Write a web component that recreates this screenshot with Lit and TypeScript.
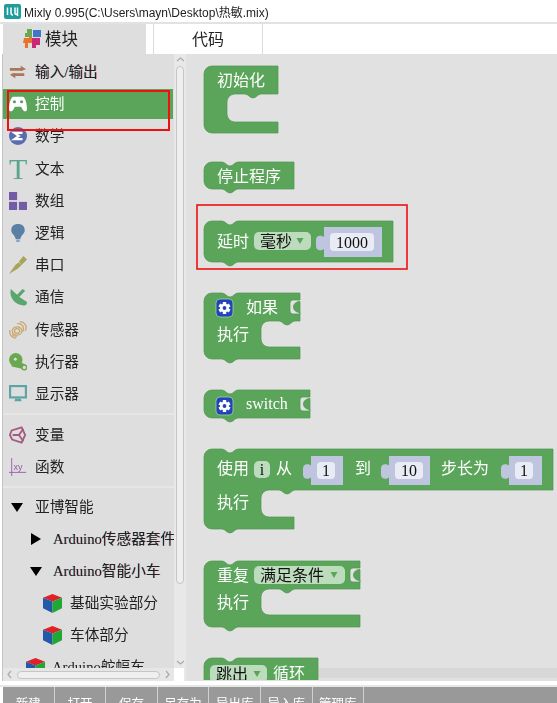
import { LitElement, html, css, svg } from "lit";
import { customElement } from "lit/decorators.js";

const BLOCK = "#5ba55b";

const notchDown = (c: number) => `H${c + 8} c-3 0 -5 4 -8 4 s-5 -4 -8 -4`;
const notchTop = (c: number) => `H${c - 8} c3 0 5 4 8 4 s5 -4 8 -4`;
const inletCut = (x: number, top: number) =>
  `V${top} H${x - 7} q-3 0 -3 3 V${top + 11} q0 3 3 3 H${x} V${top + 12.5} c-4 0 -6.5 -2.5 -6.5 -5.5 s2.5 -5.5 6.5 -5.5`;

const blockPaths = [
  `M204 74 a8 8 0 0 1 8 -8 H278 V94 ${notchDown(253)} H235 a8 8 0 0 0 -8 8 V114 a8 8 0 0 0 8 8 H278 V133 H212 a8 8 0 0 1 -8 -8 Z`,
  `M204 170 a8 8 0 0 1 8 -8 ${notchTop(230)} H294 V189 ${notchDown(230)} H212 a8 8 0 0 1 -8 -8 Z`,
  `M204 229 a8 8 0 0 1 8 -8 ${notchTop(230)} H393 V262 ${notchDown(230)} H212 a8 8 0 0 1 -8 -8 Z`,
  `M204 301 a8 8 0 0 1 8 -8 ${notchTop(230)} H300 ${inletCut(300, 300)} V321 ${notchDown(287)} H269 a8 8 0 0 0 -8 8 V339 a8 8 0 0 0 8 8 H300 V359 ${notchDown(230)} H212 a8 8 0 0 1 -8 -8 Z`,
  `M204 398 a8 8 0 0 1 8 -8 ${notchTop(230)} H310 ${inletCut(310, 397)} V418 ${notchDown(230)} H212 a8 8 0 0 1 -8 -8 Z`,
  `M204 457 a8 8 0 0 1 8 -8 ${notchTop(230)} H553 V490 ${notchDown(287)} H269 a8 8 0 0 0 -8 8 V509 a8 8 0 0 0 8 8 H294 V529 ${notchDown(230)} H212 a8 8 0 0 1 -8 -8 Z`,
  `M204 569 a8 8 0 0 1 8 -8 ${notchTop(230)} H360 ${inletCut(360, 568)} V589 ${notchDown(287)} H269 a8 8 0 0 0 -8 8 V607 a8 8 0 0 0 8 8 H360 V627 ${notchDown(230)} H212 a8 8 0 0 1 -8 -8 Z`,
  `M204 666 a8 8 0 0 1 8 -8 ${notchTop(230)} H318 V690 H204 Z`,
];

const labels: [string, number, number][] = [
  ["初始化", 217, 79],
  ["停止程序", 217, 175],
  ["延时", 217, 240],
  ["如果", 246, 306],
  ["执行", 217, 333],
  ["使用", 217, 467],
  ["从", 276, 467],
  ["到", 355, 467],
  ["步长为", 441, 467],
  ["执行", 217, 501],
  ["重复", 217, 574],
  ["执行", 217, 601],
  ["循环", 273, 672],
];

const sockets: [number, number, number, number, number, number, string][] = [
  [324, 227, 58, 30, 330, 44, "1000"],
  [311, 456, 32, 29, 317, 18, "1"],
  [389, 456, 41, 29, 395, 28, "10"],
  [509, 456, 33, 29, 515, 18, "1"],
];

const dropdowns: [number, number, number, string, number][] = [
  [254, 232, 57, "毫秒", 300],
  [254, 566, 91, "满足条件", 334],
  [210, 665, 57, "跳出", 257],
];

const gear = (x: number, y: number) => svg`
  <rect class="gear-bg" x=${x} y=${y} width="17" height="18" rx="4"></rect>
  <g transform="translate(${x + 8.5} ${y + 9})">
    ${[0, 60, 120].map((a) => svg`<rect x="-1.7" y="-6" width="3.4" height="12" fill="#fff" transform="rotate(${a})"></rect>`)}
    <circle r="4.4" fill="#fff"></circle>
    <circle r="1.9" fill="#2244bb"></circle>
  </g>`;

const icons: Record<string, unknown> = {
  io: svg`<svg class="ic" viewBox="0 0 20 20"><path d="M1 7 H15 M17 13 H3" stroke="#a9785a" stroke-width="3" fill="none"/><path d="M13 3 L19 7 L13 9Z M7 17 L1 13 L7 11Z" fill="#a9785a"/></svg>`,
  pad: svg`<svg class="ic" viewBox="0 0 20 20"><path d="M5 2 H15 C18 2 20 10 20 15 C20 19 17 19 15 16 L13.5 13 H6.5 L5 16 C3 19 0 19 0 15 C0 10 2 2 5 2Z" fill="#fff"/><circle cx="6" cy="7.5" r="1.8" fill="#5ba55b"/><circle cx="14" cy="7.5" r="1.8" fill="#5ba55b"/></svg>`,
  math: svg`<svg class="ic" viewBox="0 0 20 20"><circle cx="10" cy="10" r="10" fill="#5a6cb0"/><path d="M15 6.5 H6 L11 10 L6 13.5 H15" fill="none" stroke="#fff" stroke-width="2.4"/></svg>`,
  arr: svg`<svg class="ic" viewBox="0 0 20 20"><rect x="0" y="0" width="9" height="9" fill="#745ba5"/><rect x="0" y="11" width="9" height="9" fill="#745ba5"/><rect x="11" y="11" width="9" height="9" fill="#745ba5"/></svg>`,
  bulb: svg`<svg class="ic" viewBox="0 0 20 20"><path d="M10 0 C15 0 17.5 3 17.5 7 C17.5 11 13.5 12 12.5 17 H7.5 C6.5 12 2.5 11 2.5 7 C2.5 3 5 0 10 0Z" fill="#5b80a5"/><rect x="8" y="17.6" width="4" height="2.4" fill="#8aa5c0"/></svg>`,
  usb: svg`<svg class="ic" viewBox="0 0 20 20"><path d="M0 20 L7 10 L11 7 L14 10 L10 14 Z" fill="#a5a55b"/><path d="M11 6 L16 0 L20 4 L14 10 Z" fill="#a5a55b"/></svg>`,
  dish: svg`<svg class="ic" viewBox="0 0 20 20"><path d="M2 1 C0 9 5 18 16 19.5 C19 19.8 20 18 20 15.5 L11.5 10 L18 3 L15 1 L9 7.5 Z" fill="#5ba56e"/></svg>`,
  sensor: svg`<svg class="ic" viewBox="0 0 20 20" fill="none" stroke="#c9a66b" stroke-width="1.4"><ellipse cx="9" cy="11" rx="3" ry="2.6"/><ellipse cx="9" cy="11" rx="5.4" ry="4.6"/><path d="M9 3 C14 2 18 7 15 12 M12 1 C17 0 21 6 18 11 M1 10 C0 15 3 19 8 19 M4 14 C4 16 6 17 9 17"/></svg>`,
  act: svg`<svg class="ic" viewBox="0 0 20 20"><path d="M3 3 L19 14 L17 18 L3 15Z" fill="#6aa84f"/><circle cx="7.5" cy="7.5" r="7.5" fill="#6aa84f"/><circle cx="7" cy="7" r="1.6" fill="#dedede"/><circle cx="17" cy="16" r="2.6" fill="#dedede" stroke="#6aa84f" stroke-width="1.6"/></svg>`,
  mon: svg`<svg class="ic" viewBox="0 0 20 20"><rect x="1.2" y="1.2" width="17.6" height="12.6" fill="#dedede" stroke="#5ba5a5" stroke-width="2.4"/><path d="M7 15 H13 L14 18 H6Z" fill="#5ba5a5"/></svg>`,
  varb: svg`<svg class="ic" viewBox="0 0 20 20" fill="none" stroke="#a55b80" stroke-width="2"><path d="M14 1.5 L3 5 L1 10 L3.5 15 L14 18.5 L18 10 Z"/><path d="M4 10 H11 L16 3 M11 10 L16 17"/></svg>`,
  fn: svg`<svg class="ic" viewBox="0 0 20 20"><path d="M3 0 V20 M0 16 H19" stroke="#995ba5" stroke-width="1" fill="none"/><text class="fn" x="5" y="13">xy</text></svg>`,
  cube: svg`<svg class="cube" viewBox="0 0 20 20"><path d="M10 0 L20 4 L10 8 L0 4Z" fill="#e0202a"/><path d="M0 4 L10 8 V20 L0 15Z" fill="#2458a8"/><path d="M20 4 L10 8 V20 L20 15Z" fill="#20a834"/></svg>`,
  down: svg`<svg class="tri" viewBox="0 0 12 12"><path d="M0 2 H12 L6 11Z"/></svg>`,
  right: svg`<svg class="tri" viewBox="0 0 12 12"><path d="M1 0 L11 6 L1 12Z"/></svg>`,
};

type Row = { t: string; icon?: string; level?: string; cls?: string } | "sep";
const rows: Row[] = [
  { t: "输入/输出", icon: "io", cls: "fringe" },
  { t: "控制", icon: "pad", cls: "active" },
  { t: "数学", icon: "math" },
  { t: "文本", icon: "T" },
  { t: "数组", icon: "arr" },
  { t: "逻辑", icon: "bulb" },
  { t: "串口", icon: "usb" },
  { t: "通信", icon: "dish" },
  { t: "传感器", icon: "sensor" },
  { t: "执行器", icon: "act" },
  { t: "显示器", icon: "mon" },
  "sep",
  { t: "变量", icon: "varb" },
  { t: "函数", icon: "fn" },
  "sep",
  { t: "亚博智能", icon: "down" },
  { t: "Arduino传感器套件", icon: "right", level: "l1", cls: "fringe" },
  { t: "Arduino智能小车", icon: "down", level: "l1", cls: "fringe" },
  { t: "基础实验部分", icon: "cube", level: "l2" },
  { t: "车体部分", icon: "cube", level: "l2" },
  { t: "Arduino舵幅车", icon: "cube", level: "l3" },
];

const tools = ["新建", "打开", "保存", "另存为", "导出库", "导入库", "管理库"];

@customElement("app-root")
export class AppRoot extends LitElement {
  static styles = css`
    :host {
      display: block;
      width: 557px;
      height: 703px;
      overflow: hidden;
      background: #fff;
      font-family: "Liberation Serif", "Noto Sans CJK SC", serif;
      color: #222;
    }
    .app { display: flex; flex-direction: column; height: 703px; filter: blur(0.3px); }
    .title { height: 22px; display: flex; align-items: center; gap: 3px; padding-left: 4px; font: 12px "Liberation Sans", "Noto Sans CJK SC", sans-serif; color: #222; }
    .title svg { width: 17px; height: 15px; }
    .tabs { height: 32px; box-sizing: border-box; border-top: 2px solid #e2e2e2; display: flex; padding-left: 3px; }
    .tab { display: flex; align-items: center; justify-content: center; gap: 3px; font-size: 16px; font-family: "Noto Sans CJK SC", sans-serif; padding-bottom: 3px; box-sizing: border-box; }
    .tab.on { width: 143px; background: #dedede; padding-right: 49px; font-size: 16.5px; }
    .tab.on svg { width: 20px; height: 20px; }
    .tab.off { width: 110px; margin-left: 7px; border: solid #dcdcdc; border-width: 0 1px; }
    .main { height: 627px; display: flex; padding-left: 2px; }
    .side { width: 171px; border-left: 1px solid #c4c4c4; background: #dedede; display: flex; flex-direction: column; position: relative; }
    .tree { flex: 1; min-height: 0; overflow: hidden; padding-top: 2px; }
    .row { height: 32.2px; box-sizing: border-box; border-block: 1px solid transparent; background-clip: padding-box; display: flex; align-items: center; padding-left: 6px; font-size: 14.67px; white-space: nowrap; color: #222; }
    .row .txt { margin-bottom: 3px; }
    .row .slot { width: 26px; flex: none; display: flex; align-items: center; }
    .row.active { background-color: #5ba55b; color: #fff; width: 170px; }
    .row.l1 { padding-left: 25px; height: 32px; }
    .row.l2 { padding-left: 40px; height: 32px; }
    .row.l3 { padding-left: 23px; height: 32px; }
    .row.l2 .slot { width: 27px; }
    .row.l1 .slot { width: 25px; }
    .row.fringe .txt { text-shadow: 0.6px 0 rgba(230, 0, 40, 0.35), -0.6px 0 rgba(0, 200, 210, 0.3); }
    .ic { width: 18px; height: 18px; display: block; }
    .cube { width: 19px; height: 19px; display: block; }
    .tri { width: 12px; height: 12px; display: block; margin-left: 2px; }
    .bigT { font: 30px/20px "Liberation Serif", serif; color: #5ba58c; }
    .fn { font: 10px "Liberation Sans", sans-serif; fill: #995ba5; }
    .sep { height: 8.4px; display: flex; align-items: center; }
    .sep::after { content: ""; display: block; width: 100%; height: 2px; background: #e6e6e6; }
    .hbar { height: 13px; flex: none; background: #e6e6e6; display: flex; align-items: center; justify-content: space-between; padding: 0 3px; box-sizing: border-box; }
    .hthumb { width: 143px; height: 8px; box-sizing: border-box; background: #efefef; border: 1px solid #c6c6c6; border-radius: 4px; }
    .chev { width: 7px; height: 9px; fill: none; stroke: #aaa; stroke-width: 1.2; display: block; }
    .red { position: absolute; left: 4px; top: 36px; width: 163px; height: 41px; box-sizing: border-box; border: 2px solid #f01010; }
    .vbar { width: 12px; background: #e8e8e8; display: flex; flex-direction: column; align-items: center; padding-top: 2px; box-sizing: border-box; height: 100%; }
    .vbar .chv { width: 9px; height: 7px; fill: none; stroke: #aaa; stroke-width: 1.2; flex: none; }
    .vthumb { width: 8px; height: 518px; margin-top: 3px; box-sizing: border-box; background: #efefef; border: 1px solid #c6c6c6; border-radius: 4px; flex: none; }
    .vspace { flex: 1; }
    .corner { width: 13px; height: 13px; background: #fff; flex: none; margin-top: 2px; margin-left: -3px; align-self: flex-start; }
    .work { flex: 1; background: #e1e1e1; min-width: 0; }
    .work svg { display: block; width: 371px; height: 626px; }
    .label { font: 16px "Noto Sans CJK SC", sans-serif; fill: #fff; dominant-baseline: central; }
    .latin { font: 16px "Liberation Serif", serif; fill: #fff; dominant-baseline: central; }
    .dark { font: 16px "Noto Sans CJK SC", sans-serif; fill: #111; dominant-baseline: central; }
    .num { font: 16px "Liberation Serif", serif; fill: #111; dominant-baseline: central; text-anchor: middle; }
    .gear-bg { fill: #2244bb; stroke: #9fd09f; stroke-width: 0.8; }
    .foot { height: 6px; background: linear-gradient(#fff 0 4px, #e6e6e6 4px); flex: none; }
    .tools { flex: 1; margin-left: 3px; background: #999; display: flex; overflow: hidden; }
    .tool { width: 51.6px; box-sizing: border-box; border-right: 1px solid #d0d0d0; color: #fff; text-align: center; font: 12.5px/16px "Noto Sans CJK SC", sans-serif; padding-top: 8px; white-space: nowrap; }
  `;

  private renderIcon(name?: string) {
    if (name === "T") return html`<span class="bigT">T</span>`;
    return name ? icons[name] : null;
  }

  render() {
    return html`
      <div class="app">
        <div class="title">
          <svg viewBox="0 0 17 15">
            <rect width="17" height="15" rx="2" fill="#1f9d9d"></rect>
            <path d="M3.5 3.5 V11 M7 3.5 V9 Q7 11 9 11 M11 3.5 V9 Q11 11 13.5 10 M13.5 3.5 V12" stroke="#fff" stroke-width="1.5" fill="none"></path>
          </svg>
          <span>Mixly 0.995(C:\\Users\\mayn\\Desktop\\热敏.mix)</span>
        </div>
        <div class="tabs">
          <div class="tab on">
            <svg viewBox="0 0 20 20">
              <path d="M2 10 H7 V6 H10 V10 H10 V15 H6 V20 H3 V15 H1 Z" fill="#e8732a"></path>
              <path d="M5 1 H10 V9 H3 V5 H5Z" fill="#6aa84f"></path>
              <path d="M11 2 H19 V9 H11Z" fill="#3d77c9"></path>
              <path d="M10 10 H18 V17 H14 V20 H10Z" fill="#c92a78"></path>
            </svg>
            <span>模块</span>
          </div>
          <div class="tab off">代码</div>
        </div>
        <div class="main">
          <div class="side">
            <div class="tree">
              ${rows.map((r) =>
                r === "sep"
                  ? html`<div class="sep"></div>`
                  : html`<div class="row ${r.level ?? ""} ${r.cls ?? ""}">
                      <span class="slot">${this.renderIcon(r.icon)}</span><span class="txt">${r.t}</span>
                    </div>`
              )}
            </div>
            <div class="hbar">
              <svg class="chev" viewBox="0 0 7 9"><path d="M5 1 L2 4.5 L5 8"></path></svg>
              <div class="hthumb"></div>
              <svg class="chev" viewBox="0 0 7 9"><path d="M2 1 L5 4.5 L2 8"></path></svg>
            </div>
            <div class="red"></div>
          </div>
          <div class="vbar">
            <svg class="chv" viewBox="0 0 9 7"><path d="M1 5 L4.5 2 L8 5"></path></svg>
            <div class="vthumb"></div>
            <div class="vspace"></div>
            <svg class="chv" viewBox="0 0 9 7"><path d="M1 2 L4.5 5 L8 2"></path></svg>
            <div class="corner"></div>
          </div>
          <div class="work">
            <svg viewBox="186 54 371 626">
              <rect x="318" y="668" width="239" height="10" fill="#d8d8d8"></rect>
              ${blockPaths.map((d) => svg`<path d=${d} fill=${BLOCK} stroke="#4f954f" stroke-width="0.7"></path>`)}
              ${labels.map(([t, x, y]) => svg`<text class="label" x=${x} y=${y}>${t}</text>`)}
              <text class="latin" x="246" y="403">switch</text>
              ${gear(216, 299)} ${gear(216, 397)}
              ${sockets.map(([x, y, w, h, fx, fw, t]) => {
                const cy = y + h / 2;
                return svg`
                  <path fill="#bfc5de" d="M${x} ${y} h${w} v${h} h${-w} V${cy + 7} c-3 2 -8 2 -8 -3 v-6 c0 -5 5 -5 8 -3 Z"></path>
                  <rect x=${fx} y=${y + 6} width=${fw} height=${h - 12} rx="4" fill="#e9ebf5"></rect>
                  <text class="num" x=${fx + fw / 2} y=${cy}>${t}</text>`;
              })}
              ${dropdowns.map(([x, y, w, t, ax]) => svg`
                <rect x=${x} y=${y} width=${w} height="18" rx="5" fill="#bddcbd"></rect>
                <text class="dark" x=${x + 6} y=${y + 8}>${t}</text>
                <path d="M${ax - 3.5} ${y + 6} h7 l-3.5 6 Z" fill=${BLOCK}></path>`)}
              <rect x="254" y="461" width="16" height="17" rx="5" fill="#bddcbd"></rect>
              <text class="num" x="262" y="469">i</text>
              <rect x="197" y="205" width="210" height="64" fill="none" stroke="#f01010" stroke-width="1.6"></rect>
            </svg>
          </div>
        </div>
        <div class="foot"></div>
        <div class="tools">
          ${tools.map((t) => html`<div class="tool">${t}</div>`)}
        </div>
      </div>
    `;
  }
}
